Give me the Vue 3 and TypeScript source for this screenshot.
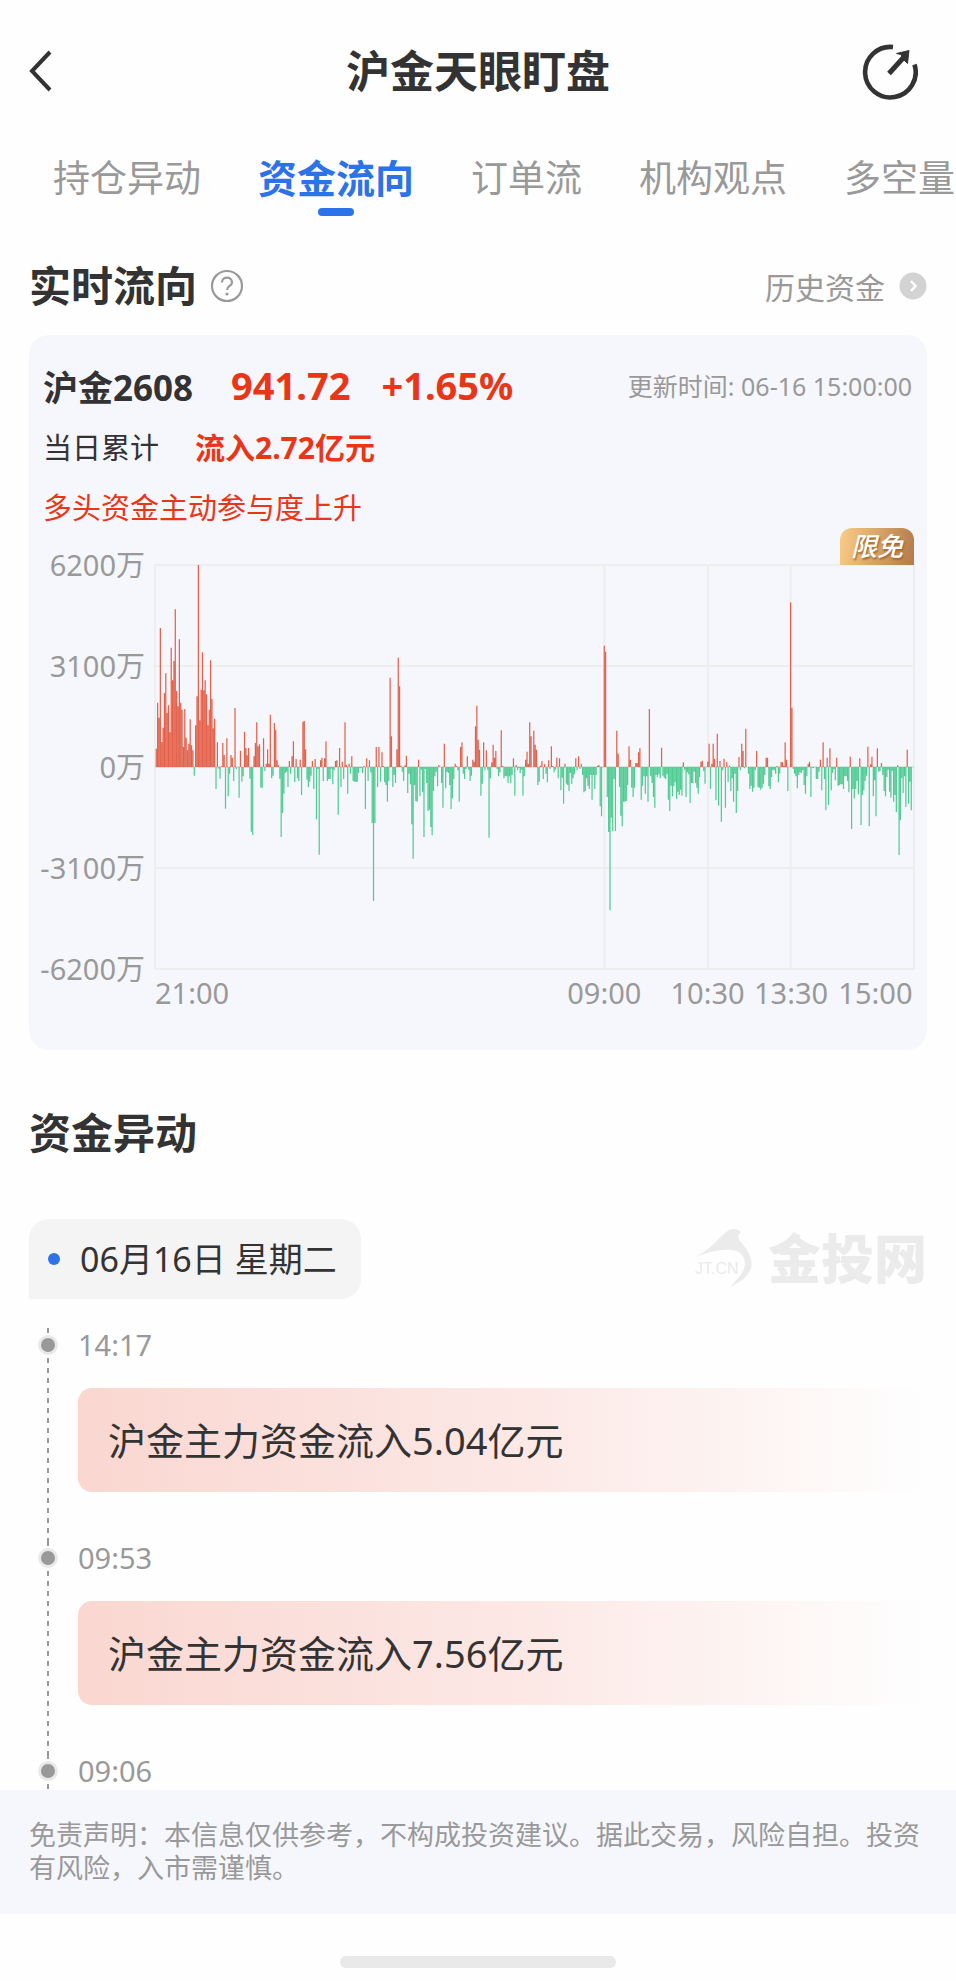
<script setup lang="ts">
interface Segment {
  from: number
  to: number
  values: number[]
}

interface FlowEvent {
  time: string
  text?: string
}

const tabs = ['持仓异动', '资金流向', '订单流', '机构观点', '多空量']
const activeTab = '资金流向'

const yLabels = ['6200万', '3100万', '0万', '-3100万', '-6200万']
const xLabels = [
  { text: '21:00', at: 0, align: 'start' },
  { text: '09:00', at: 59.2, align: 'middle' },
  { text: '10:30', at: 72.8, align: 'middle' },
  { text: '13:30', at: 83.8, align: 'middle' },
  { text: '15:00', at: 99.8, align: 'end' },
]

const W = 2277
const H = 1212
const ZERO = 606
const columns = [1348, 1659, 1907]

// Net flow per minute; 606 units equal 62 million.
const segments: Segment[] = [
  {
    from: 4,
    to: 672,
    values: [
      55, 193, 148, 417, 75, 118, 222, 281, 162, 185, 104, 358, 260, 318, 473, 228, 182, 383, 193, 172,
      60, 174, 88, 50, 70, 143, 65, 50, -26, 125, 212, 606, 140, 232, 344, 230, 260, 218, 125, 172,
      320, 204, 116, 145, -66, 74, -5, -35, 2, 72, 36, -125, 86, -88, -20, 36, 28, -42, 177, -6,
      0, -92, 49, -44, -28, 106, 57, 35, 57, -35, -194, -204, 32, 72, 134, 62, 68, -62, -62, 86,
      -12, 10, 53, 10, 157, -34, -26, 132, 112, 20, 5, -35, -210, -138, -80, -18, -14, -60, 18, -20,
      32, 77, -45, 24, -34, -42, 22, -84, 136, 138, 53, -38, -60, -44, -26, 18, -66, 24, -157, -6,
      -263, 20, 28, -42, 26, 77, -42, -36, -36, -5, -52, -10, 18, 20, -143, 57, -60, 16, -36, 134,
      6, -80, 10, -20, 32, -42, -44, -44, -44, -18, -4, -4, -18, 3, -126, 26, -42, 20, -16, -168,
      -402, -168, 60, -60, 60,
    ],
  },
  {
    from: 677,
    to: 1352,
    values: [
      -44, 44, 3, -46, -54, -104, -42, 268, 92, -60, -24, -48, 53, 328, 242, 4, -14, -42, 5, 34,
      -78, -20, -52, -172, -275, -54, -102, -104, 22, -88, -8, -74, -210, -6, -48, -132, -128, -180, -205, -72,
      -28, -14, -58, 6, 0, -48, -122, 70, -64, -14, -18, -54, -126, -94, -36, 10, 3, -10, -104, 60,
      74, -20, -36, -6, 32, -8, -42, -26, 22, 16, 122, 184, 82, 52, -86, -50, 74, -10, 50, -8,
      -212, -34, 14, 67, 28, 48, -6, -28, -16, 110, 3, -34, -28, -28, -48, -28, -48, -24, 26, -86,
      6, -10, -3, -18, -8, -86, -28, 22, 46, 10, 134, 92, 0, 109, 67, 52, -54, -44, 4, 18,
      -36, 8, -20, -46, 20, -6, 62, 3, -16, -8, 28, -34, 26, -70, -32, -110, 10, -50, -54, -72,
      -18, -50, -34, -22, 26, -10, 32, -6, 10, -24, -76, -72, -34, -56, -66, -24, -98, -24, -66, -24,
      3, 6, -118, -148, 0, 364, 346,
    ],
  },
  {
    from: 1357,
    to: 1911,
    values: [
      -90, -195, -430, -152, -192, -36, -192, 109, 40, -60, -146, -178, -104, -104, -102, -54, 62, 22, -62, -90,
      -62, 12, 12, 44, 56, -98, -56, -28, -80, -28, -104, 174, -28, -48, -90, -122, -24, -30, -22, -34,
      58, -26, -32, -36, -22, -98, -132, -56, -88, -58, -46, -96, -74, -84, -68, -86, 14, -8, -90, -16,
      -22, -108, -48, -48, -14, -48, -62, -80, -30, 16, 19, -12, -50, 0, 16, 70, -66, 10, 70, 24,
      -100, 100, -116, 18, -164, -10, 25, -122, 15, -44, 4, -72, -34, -104, -20, -138, -72, 30, -10, 70,
      48, -4, 115, 0, -20, -66, -56, -74, -62, -10, 48, -60, -62, -68, -62, -50, -24, 28, 28, -58,
      -66, -30, -8, -10, -20, 3, -46, -20, 15, 14, 4, 74, 22, -72, 0, 494, 178,
    ],
  },
  {
    from: 1915,
    to: 2269,
    values: [
      -6, -20, -28, -64, -24, -16, -18, -10, -54, -80, -28, 10, 16, -90, -2, -4, 0, -36, -36, -14,
      22, -70, 74, -36, -130, 28, -114, 56, -70, -18, -6, -40, 28, -56, -54, -52, -52, -66, -28, -28,
      -42, -76, 31, -186, -66, -94, -66, -42, -82, 26, -174, -84, -70, -42, -26, 61, -178, 8, 31, -88,
      -40, -148, 56, -14, -12, 12, -24, -72, -88, -30, -8, -74, -92, -12, -104, -84, -136, 5, -264, -160,
      -34, -78, -28, -120, 52, -110, -44, -130,
    ],
  },
]

const bars = segments.flatMap(({ from, to, values }) =>
  values.map((v, i) => ({ v, x: from + ((to - from) * i) / (values.length - 1) })),
)

function barPath(sign: number): string {
  return bars
    .filter((b) => b.v * sign > 0)
    .map((b) => `M${(b.x - 2).toFixed(1)} ${ZERO}v${-b.v}h3.7V${ZERO}z`)
    .join('')
}

const inflow = barPath(1)
const outflow = barPath(-1)

const events: FlowEvent[] = [
  { time: '14:17', text: '沪金主力资金流入5.04亿元' },
  { time: '09:53', text: '沪金主力资金流入7.56亿元' },
  { time: '09:06' },
]
</script>

<template>
  <div class="page">
    <header class="topbar">
      <button class="icon-button" type="button" aria-label="返回">
        <svg width="24" height="42" viewBox="0 0 24 42" fill="none" stroke="#333" stroke-width="4">
          <path d="M21 2 3 21 21 40" />
        </svg>
      </button>
      <h1>沪金天眼盯盘</h1>
      <button class="icon-button share" type="button" aria-label="分享">
        <svg width="56" height="58" viewBox="0 0 56 58" fill="none" stroke="#333" stroke-width="4.6">
          <path d="M31 5A25.300 25.300 0 1 0 52.500 22.500" />
          <path d="M27 31.500 42 15" stroke-width="5" />
          <path d="M34.500 11.500 47 8.500 45.500 21.500 41 17 39 12.500z" fill="#333" stroke-width="1" stroke-linejoin="round" />
        </svg>
      </button>
    </header>

    <nav class="tabs">
      <a v-for="tab in tabs" :key="tab" href="#" :class="{ active: tab === activeTab }">{{ tab }}</a>
    </nav>

    <main>
      <div class="section-head">
        <h2>实时流向</h2>
        <button class="icon-button" type="button" aria-label="说明">
          <svg width="34" height="34" viewBox="0 0 34 34" fill="none" stroke="#999" stroke-width="2.200">
            <circle cx="17" cy="17" r="15" />
            <path d="M12 13.500C12 7 22 7 22 13.500C22 17 17 17 17 21" />
            <circle cx="17" cy="25" r="1.600" fill="#999" stroke="none" />
          </svg>
        </button>
        <a class="history" href="#">
          历史资金
          <svg width="28" height="28" viewBox="0 0 28 28" fill="none">
            <circle cx="14" cy="14" r="13.500" fill="#d3d3d3" />
            <path d="M12 9 16.500 14 12 19" stroke="#fff" stroke-width="2.600" />
          </svg>
        </a>
      </div>

      <section class="card">
        <div class="quote">
          <strong class="name">沪金2608</strong>
          <strong class="price">941.72</strong>
          <strong class="price">+1.65%</strong>
          <span class="updated">更新时间: 06-16 15:00:00</span>
        </div>
        <div class="total">
          <span>当日累计</span>
          <strong>流入2.72亿元</strong>
        </div>
        <p class="trend">多头资金主动参与度上升</p>

        <div class="chart">
          <div class="y-axis">
            <span v-for="label in yLabels" :key="label">{{ label }}</span>
          </div>
          <div class="plot">
            <span class="badge">限免</span>
            <svg :viewBox="`0 0 ${W} ${H}`" preserveAspectRatio="none" role="img" aria-label="资金流向">
              <g class="grid">
                <rect x="0" y="0" :width="W" :height="H" />
                <path :d="`M0 303H${W}M0 909H${W}`" />
                <path v-for="x in columns" :key="x" :d="`M${x} 0V${H}`" />
              </g>
              <path class="zero" :d="`M0 ${ZERO}H${W}`" />
              <path class="inflow" :d="inflow" />
              <path class="outflow" :d="outflow" />
            </svg>
          </div>
          <svg class="x-axis">
            <text v-for="l in xLabels" :key="l.text" :x="`${l.at}%`" y="35" :text-anchor="l.align">{{ l.text }}</text>
          </svg>
        </div>
      </section>

      <h2 class="alerts-title">资金异动</h2>

      <div class="date-row">
        <div class="date"><i></i>06月16日 星期二</div>
        <div class="brand">
          <span class="mark">
            <svg width="62" height="60" viewBox="0 0 62 60" fill="#ebebeb">
              <path d="M0 29C15 24 25 11 34 3C39-1 47-1 49 4C46 5 46 7 47 11C66 31 64 46 38 58C51 45 57 36 50 26C45 18 25 19 0 29z" />
            </svg>
            <small>JT.CN</small>
          </span>
          <b>金投网</b>
        </div>
      </div>

      <ol class="timeline">
        <li v-for="e in events" :key="e.time">
          <time>{{ e.time }}</time>
          <p v-if="e.text">{{ e.text }}</p>
        </li>
      </ol>
    </main>

    <footer>免责声明：本信息仅供参考，不构成投资建议。据此交易，风险自担。投资有风险，入市需谨慎。</footer>
    <div class="home"></div>
  </div>
</template>

<style>
body {
  margin: 0;
  background: #fefefe;
}
</style>

<style scoped>
.page {
  overflow: hidden;
  color: #333;
  font-family: "Noto Sans", "Noto Sans CJK SC", sans-serif;
}
h1,
h2,
p,
ol {
  margin: 0;
  padding: 0;
}
a {
  color: inherit;
  text-decoration: none;
}
.icon-button {
  display: flex;
  padding: 0;
  border: 0;
  background: none;
}
.topbar {
  display: grid;
  grid-template-columns: 1fr auto 1fr;
  align-items: center;
  height: 141px;
  padding: 0 29px;
}
h1 {
  font-size: 44px;
  line-height: 60px;
}
.share {
  justify-self: end;
  margin-right: 9px;
}
.tabs {
  display: flex;
  gap: 57px;
  height: 75px;
  padding-left: 53px;
  color: #999;
  font-size: 37px;
  line-height: 74px;
  white-space: nowrap;
}
.tabs a {
  flex: none;
}
.tabs .active {
  position: relative;
  color: #2c73ea;
  font-size: 39px;
  font-weight: 700;
}
.active::after {
  content: "";
  position: absolute;
  bottom: 0;
  left: 50%;
  width: 36px;
  height: 8px;
  margin-left: -18px;
  border-radius: 4px;
  background: #2c73ea;
}
main {
  padding: 0 29px;
}
h2 {
  font-size: 42px;
  line-height: 60px;
}
.section-head {
  display: flex;
  align-items: center;
  gap: 13px;
  height: 98px;
  margin-top: 21px;
}
.history {
  display: flex;
  align-items: center;
  gap: 14px;
  margin-left: auto;
  color: #999;
  font-size: 30px;
}
.card {
  padding: 23px 13px 37px 14px;
  border-radius: 20px;
  background: #f6f7fc;
}
.quote {
  display: flex;
  align-items: center;
  height: 54px;
}
.name {
  margin-right: 38px;
  font-size: 35px;
}
.price {
  margin-right: 31px;
  color: #e93616;
  font-size: 38px;
}
.updated {
  margin-right: 2px;
  margin-left: auto;
  color: #999;
  font-size: 25px;
}
.total {
  display: flex;
  align-items: center;
  gap: 36px;
  height: 68px;
  font-size: 29px;
}
.total strong {
  color: #e93616;
  font-size: 30px;
}
.trend {
  color: #e93616;
  font-size: 29px;
  line-height: 56px;
}
.chart {
  display: grid;
  grid-template-columns: 102px 1fr;
  grid-template-rows: 404px 44px;
  column-gap: 10px;
  margin-top: 29px;
  color: #999;
  font-size: 29px;
}
.y-axis {
  display: flex;
  flex-direction: column;
  align-items: flex-end;
  justify-content: space-between;
  margin: -20px 0;
  line-height: 40px;
  white-space: nowrap;
}
.plot {
  position: relative;
}
.plot svg {
  display: block;
  width: 100%;
  height: 100%;
  overflow: visible;
}
.grid {
  fill: none;
  stroke: #eee;
  stroke-width: 6;
}
.zero {
  stroke: #9be3c3;
  stroke-width: 3;
}
.inflow {
  fill: #e4604a;
}
.outflow {
  fill: #50cb93;
}
.badge {
  position: absolute;
  right: 0;
  bottom: 100%;
  width: 74px;
  border-radius: 12px 12px 0 0;
  background: linear-gradient(100deg, #fbcd86, #b3794b);
  color: #fff;
  font-size: 26px;
  font-style: italic;
  font-weight: 500;
  line-height: 37px;
  text-align: center;
  text-shadow: 1px 2px 2px #a0682f;
}
.x-axis {
  grid-column: 2;
  width: 100%;
  height: 44px;
  overflow: visible;
  fill: #999;
}
.alerts-title {
  margin-top: 53px;
}
.date-row {
  display: flex;
  align-items: center;
  justify-content: space-between;
  margin-top: 56px;
}
.date {
  display: flex;
  align-items: center;
  gap: 20px;
  padding: 0 24px 0 19px;
  border-radius: 20px 20px 20px 0;
  background: #f4f4f4;
  font-size: 34px;
  line-height: 80px;
}
.date i {
  width: 12px;
  height: 12px;
  border-radius: 50%;
  background: #2c73ea;
}
.brand {
  display: flex;
  align-items: center;
  gap: 14px;
  color: #ebebeb;
}
.brand b {
  font-size: 53px;
  font-weight: 900;
  line-height: 60px;
}
.mark {
  display: flex;
  position: relative;
}
.mark small {
  position: absolute;
  top: 30px;
  left: 3px;
  font-family: "Liberation Sans", sans-serif;
  font-size: 16px;
  line-height: 20px;
}
.timeline {
  margin-top: 29px;
  list-style: none;
}
.timeline li {
  position: relative;
  height: 213px;
  padding-left: 49px;
  background: repeating-linear-gradient(#999 0 5px, transparent 5px 10px) 18px 0 / 2px 100% no-repeat;
}
.timeline li:last-child {
  height: 36px;
}
.timeline li::before {
  content: "";
  position: absolute;
  top: 7px;
  left: 9px;
  width: 14px;
  height: 14px;
  border: 3px solid #e9e9e9;
  border-radius: 50%;
  background: #999;
}
time {
  display: block;
  color: #999;
  font-size: 29px;
  line-height: 34px;
}
.timeline p {
  margin-top: 26px;
  padding-left: 30px;
  border-radius: 14px;
  background: linear-gradient(90deg, #fad7d1, #fce8e5 52%, #fefefe);
  font-size: 38px;
  line-height: 104px;
}
footer {
  padding: 28px 29px 30px;
  background: #f6f7fc;
  color: #999;
  font-size: 27px;
  line-height: 33px;
}
.home {
  width: 276px;
  height: 12px;
  margin: 42px auto 13px;
  border-radius: 6px;
  background: #e9e9e9;
}
</style>
